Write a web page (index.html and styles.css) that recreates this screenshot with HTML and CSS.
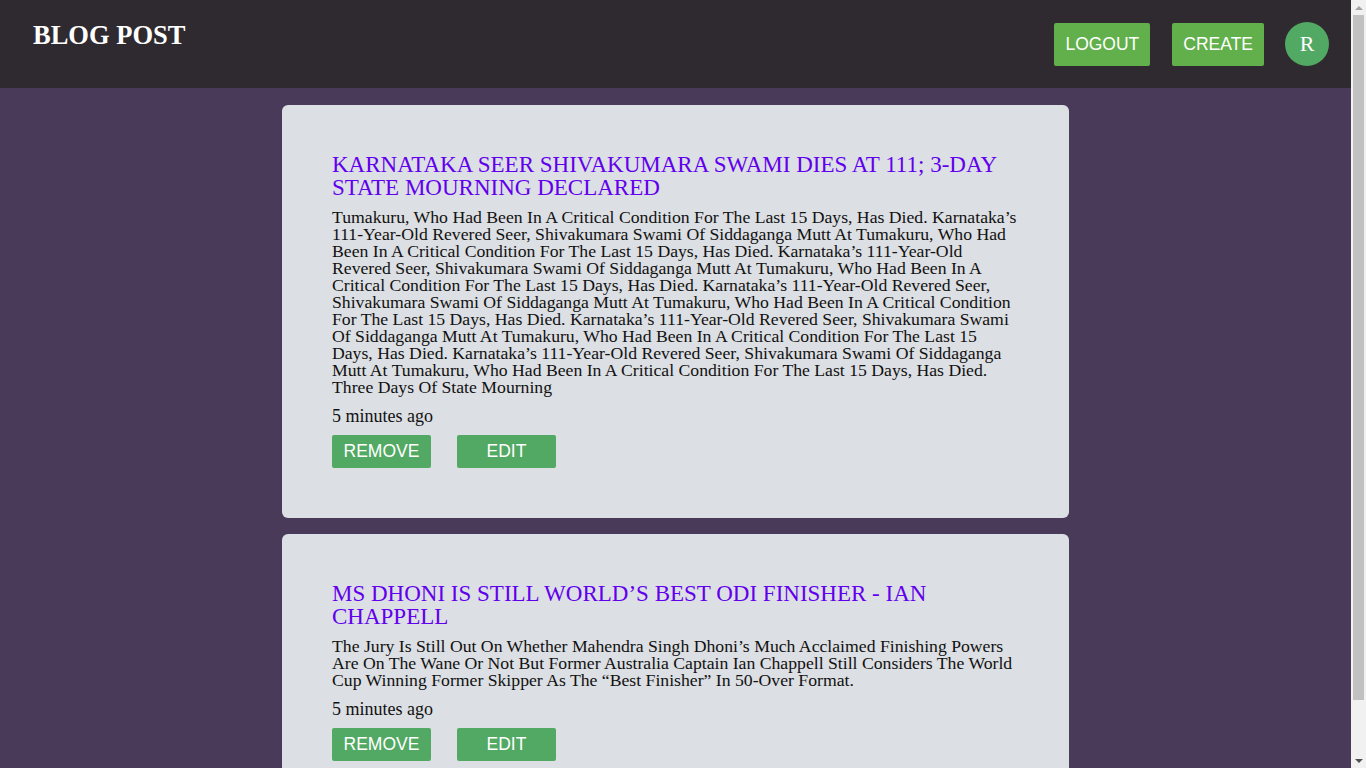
FILE: index.html
```html
<!DOCTYPE html>
<html lang="en">
<head>
<meta charset="utf-8">
<title>Blog Post</title>
<link rel="stylesheet" href="styles.css">
</head>
<body>
<div class="page">
  <header class="topbar">
    <h1 class="brand">BLOG POST</h1>
    <nav class="actions">
      <button class="nav-btn">LOGOUT</button>
      <button class="nav-btn">CREATE</button>
      <div class="avatar">R</div>
    </nav>
  </header>
  <main class="feed">
    <article class="card">
      <h2 class="card-title">Karnataka seer Shivakumara Swami dies at 111; 3-day state mourning declared</h2>
      <p class="card-text">Tumakuru, who had been in a critical condition for the last 15 days, has died. Karnataka’s 111-year-old revered seer, Shivakumara Swami of Siddaganga Mutt at Tumakuru, who had been in a critical condition for the last 15 days, has died. Karnataka’s 111-year-old revered seer, Shivakumara Swami of Siddaganga Mutt at Tumakuru, who had been in a critical condition for the last 15 days, has died. Karnataka’s 111-year-old revered seer, Shivakumara Swami of Siddaganga Mutt at Tumakuru, who had been in a critical condition for the last 15 days, has died. Karnataka’s 111-year-old revered seer, Shivakumara Swami of Siddaganga Mutt at Tumakuru, who had been in a critical condition for the last 15 days, has died. Karnataka’s 111-year-old revered seer, Shivakumara Swami of Siddaganga Mutt at Tumakuru, who had been in a critical condition for the last 15 days, has died. Three days of state mourning</p>
      <div class="card-time">5 minutes ago</div>
      <div class="card-actions">
        <button class="card-btn">REMOVE</button>
        <button class="card-btn">EDIT</button>
      </div>
    </article>
    <article class="card">
      <h2 class="card-title">MS Dhoni is still world’s best ODI finisher - Ian Chappell</h2>
      <p class="card-text">The jury is still out on whether Mahendra Singh Dhoni’s much acclaimed finishing powers are on the wane or not but former Australia captain Ian Chappell still considers the World Cup winning former skipper as the “best finisher” in 50-over format.</p>
      <div class="card-time">5 minutes ago</div>
      <div class="card-actions">
        <button class="card-btn">REMOVE</button>
        <button class="card-btn">EDIT</button>
      </div>
    </article>
  </main>
</div>
<div class="scrollbar" aria-hidden="true">
  <div class="sb-arrow sb-up"></div>
  <div class="sb-track"><div class="sb-thumb"></div></div>
  <div class="sb-arrow sb-down"></div>
</div>
</body>
</html>
```

FILE: styles.css
```css
html, body {
  margin: 0;
  padding: 0;
}
body {
  background: #4a3a5a;
  font-family: "Liberation Serif", "Times New Roman", serif;
  color: #111;
}
.page {
  margin-right: 15px;
}
.scrollbar {
  position: fixed;
  top: 0;
  right: 0;
  bottom: 0;
  width: 15px;
  background: #f1f1f1;
  display: flex;
  flex-direction: column;
}
.sb-arrow {
  height: 15px;
  display: flex;
  align-items: center;
  justify-content: center;
}
.sb-up::before,
.sb-down::before {
  content: "";
  width: 0;
  height: 0;
  border-left: 4px solid transparent;
  border-right: 4px solid transparent;
}
.sb-up::before {
  border-bottom: 4px solid #a3a3a3;
}
.sb-down::before {
  border-top: 4px solid #505050;
}
.sb-track {
  flex: 1;
  padding: 0 2px;
  display: flex;
  flex-direction: column;
}
.sb-thumb {
  height: 685px;
  background: #c1c1c1;
}
.topbar {
  display: flex;
  justify-content: space-between;
  align-items: flex-start;
  height: 88px;
  box-sizing: border-box;
  padding: 22px 22px 22px 33px;
  background: #2f2a30;
}
.brand {
  margin: 0;
  font-size: 26.5px;
  line-height: 26px;
  font-weight: bold;
  color: #fff;
}
.actions {
  display: flex;
  align-items: center;
  gap: 22px;
}
.nav-btn {
  height: 43px;
  padding: 0 11px;
  border: none;
  border-radius: 2px;
  background: #62b04b;
  color: #fff;
  font-family: "Liberation Sans", Arial, sans-serif;
  font-size: 17.5px;
  cursor: pointer;
}
.avatar {
  width: 44px;
  height: 44px;
  border-radius: 50%;
  background: #52a963;
  color: #fff;
  display: flex;
  align-items: center;
  justify-content: center;
  font-size: 22px;
  margin-left: -1px;
}
.feed {
  display: flex;
  flex-direction: column;
  align-items: center;
  gap: 16px;
  padding: 17px 0 24px;
}
.card {
  width: 787px;
  box-sizing: border-box;
  background: #dcdfe3;
  border-radius: 6px;
  padding: 48px 50px 50px;
  display: flex;
  flex-direction: column;
  gap: 10px;
}
.card-title {
  margin: 0;
  font-weight: normal;
  font-size: 23px;
  line-height: 23px;
  text-transform: uppercase;
  color: #6200ee;
}
.card-text {
  margin: 0;
  font-size: 17.7px;
  line-height: 17px;
  text-transform: capitalize;
}
.card-time {
  margin-top: 1px;
  font-size: 18px;
  line-height: 18px;
}
.card-actions {
  display: flex;
  gap: 26px;
}
.card-btn {
  width: 99px;
  height: 33px;
  border: none;
  border-radius: 2px;
  background: #52a963;
  color: #fff;
  font-family: "Liberation Sans", Arial, sans-serif;
  font-size: 17.5px;
  cursor: pointer;
}
```
